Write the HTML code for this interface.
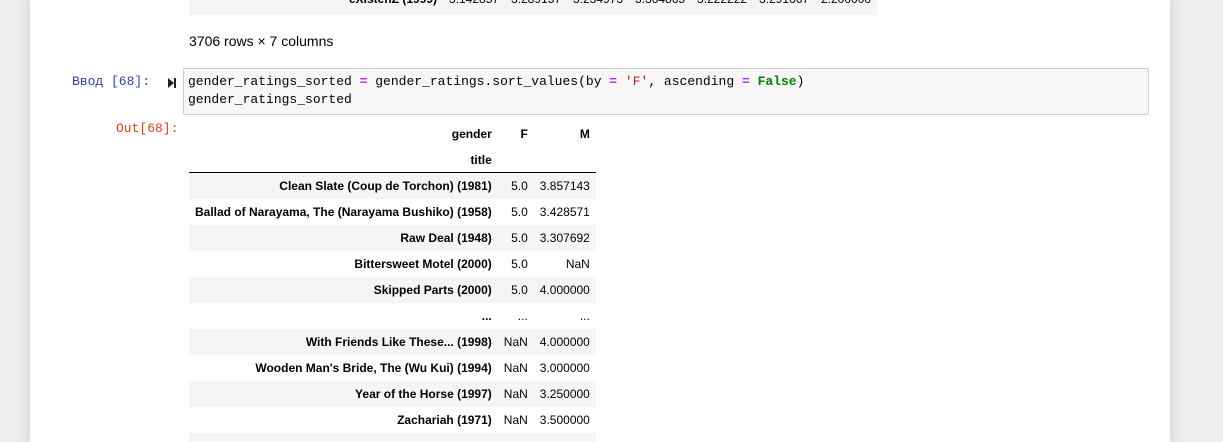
<!DOCTYPE html>
<html><head><meta charset="utf-8"><style>
html,body{margin:0;padding:0;width:1223px;height:442px;overflow:hidden;background:#eee;font-family:"Liberation Sans",Arial,sans-serif;}
#wrap{position:relative;width:1223px;height:442px;overflow:hidden;}
#nb{position:absolute;left:30px;top:0;width:1140px;height:442px;background:#fff;box-shadow:0 0 12px 1px rgba(87,87,87,0.2);}
.abs{position:absolute;}
.mono{font-family:"Liberation Mono","DejaVu Sans Mono",monospace;font-size:13px;}
#topband{left:189px;top:0;width:688px;height:15px;background:#f5f5f5;overflow:hidden;}
#topband span{position:absolute;top:-8px;font-size:12px;color:#000;}
#rows{left:189px;top:33px;font-size:14px;color:#000;}
#inbox{left:183px;top:68px;width:964px;height:45px;background:#f7f7f7;border:1px solid #cfcfcf;border-radius:2px;}
#code{left:188px;top:73px;line-height:18px;color:#000;white-space:pre;}
.op{color:#aa22ff;font-weight:bold}.st{color:#ba2121}.kw{color:#008000;font-weight:bold}
#pin{left:72px;top:74px;color:#303f9f;}
#pout{left:116px;top:121px;color:#d84315;}
table{position:absolute;left:189px;top:121px;border-collapse:collapse;font-size:12px;}
td,th{padding:0 6px;height:26px;text-align:right;white-space:nowrap;}
th{font-weight:bold;}
tbody tr:nth-child(odd){background:#f5f5f5;}
thead tr:last-child th{border-bottom:1px solid #000;height:25px;}
</style></head><body><div id="wrap">
<div id="nb"></div>
<div class="abs" id="topband">
<span style="left:160px;font-weight:bold">eXistenZ (1999)</span>
<span style="left:260px">3.142857</span><span style="left:322px">3.289157</span><span style="left:384px">3.234973</span><span style="left:446px">3.364865</span><span style="left:508px">3.222222</span><span style="left:570px">3.291667</span><span style="left:632px">2.200000</span>
</div>
<div class="abs" id="rows">3706 rows × 7 columns</div>
<div class="abs mono" id="pin">Ввод [68]:</div>
<svg class="abs" style="left:167px;top:77px" width="10" height="12"><polygon points="1,1 7,6 1,11" fill="#222"/><rect x="7" y="1" width="2" height="10" fill="#222"/></svg>
<div class="abs" id="inbox"></div>
<div class="abs mono" id="code">gender_ratings_sorted <span class="op">=</span> gender_ratings.sort_values(by <span class="op">=</span> <span class="st">'F'</span>, ascending <span class="op">=</span> <span class="kw">False</span>)
gender_ratings_sorted</div>
<div class="abs mono" id="pout">Out[68]:</div>
<table>
<thead>
<tr><th style="width:291px">gender</th><th style="width:24px">F</th><th style="width:49px">M</th></tr>
<tr><th>title</th><th></th><th></th></tr>
</thead>
<tbody>
<tr><th>Clean Slate (Coup de Torchon) (1981)</th><td>5.0</td><td>3.857143</td></tr>
<tr><th>Ballad of Narayama, The (Narayama Bushiko) (1958)</th><td>5.0</td><td>3.428571</td></tr>
<tr><th>Raw Deal (1948)</th><td>5.0</td><td>3.307692</td></tr>
<tr><th>Bittersweet Motel (2000)</th><td>5.0</td><td>NaN</td></tr>
<tr><th>Skipped Parts (2000)</th><td>5.0</td><td>4.000000</td></tr>
<tr style="background:#fff"><th>...</th><td>...</td><td>...</td></tr>
<tr><th>With Friends Like These... (1998)</th><td>NaN</td><td>4.000000</td></tr>
<tr style="background:#fff"><th>Wooden Man's Bride, The (Wu Kui) (1994)</th><td>NaN</td><td>3.000000</td></tr>
<tr><th>Year of the Horse (1997)</th><td>NaN</td><td>3.250000</td></tr>
<tr style="background:#fff"><th>Zachariah (1971)</th><td>NaN</td><td>3.500000</td></tr>
<tr><th>&nbsp;</th><td></td><td></td></tr>
</tbody>
</table>
</div></body></html>
